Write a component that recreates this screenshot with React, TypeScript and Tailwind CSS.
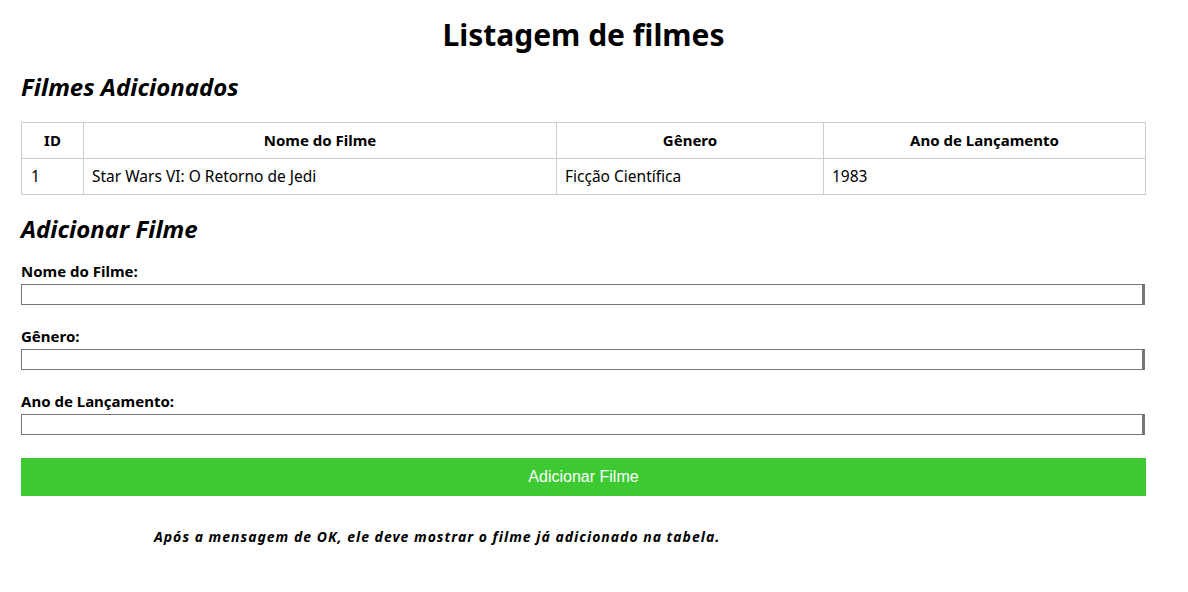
import React from 'react';

const filmes = [
  { id: 1, nome: 'Star Wars VI: O Retorno de Jedi', genero: 'Ficção Científica', ano: '1983' },
];

const campos = ['Nome do Filme:', 'Gênero:', 'Ano de Lançamento:'];

const App = () => {
  return (
    <div className="bg-white text-black min-h-[592px] pl-[21px] pt-[15px] font-['Noto_Sans',sans-serif]">
      <div className="w-[1125px]">
        <h1 className="text-center text-[30px] font-bold leading-[40px]">Listagem de filmes</h1>

        <h2 className="mt-[17px] text-[24px] font-bold italic leading-[30px]">Filmes Adicionados</h2>

        <table className="mt-[20px] w-full border-collapse">
          <thead>
            <tr className="h-[36px] text-[15px]">
              <th className="w-[62px] border border-[#cccccc] font-bold">ID</th>
              <th className="w-[473px] border border-[#cccccc] font-bold">Nome do Filme</th>
              <th className="w-[267px] border border-[#cccccc] font-bold">Gênero</th>
              <th className="border border-[#cccccc] font-bold">Ano de Lançamento</th>
            </tr>
          </thead>
          <tbody>
            {filmes.map((f) => (
              <tr key={f.id} className="h-[36px] text-[15.5px]">
                <td className="border border-[#cccccc] px-[9px]">{f.id}</td>
                <td className="border border-[#cccccc] px-[8px]">{f.nome}</td>
                <td className="border border-[#cccccc] px-[8px]">{f.genero}</td>
                <td className="border border-[#cccccc] px-[8px]">{f.ano}</td>
              </tr>
            ))}
          </tbody>
        </table>

        <h2 className="mt-[19px] text-[24px] font-bold italic leading-[30px]">Adicionar Filme</h2>

        <form className="mt-[17px] flex flex-col gap-[21px]">
          {campos.map((c) => (
            <div key={c} className="flex flex-col">
              <label className="text-[15px] font-bold leading-[20px]">{c}</label>
              <input
                type="text"
                className="mt-[3px] h-[21px] w-[1124px] border border-[#767676] border-r-[3px] bg-white"
              />
            </div>
          ))}
          <button
            type="button"
            className="mt-[2px] h-[38px] w-full bg-[#3cc932] text-white text-[16px] font-['Liberation_Sans',sans-serif]"
          >
            Adicionar Filme
          </button>
        </form>

        <p className="mt-[30px] pl-[133px] text-[14px] font-bold italic tracking-[1px]">
          Após a mensagem de OK, ele deve mostrar o filme já adicionado na tabela.
        </p>
      </div>
    </div>
  );
};

export default App;
